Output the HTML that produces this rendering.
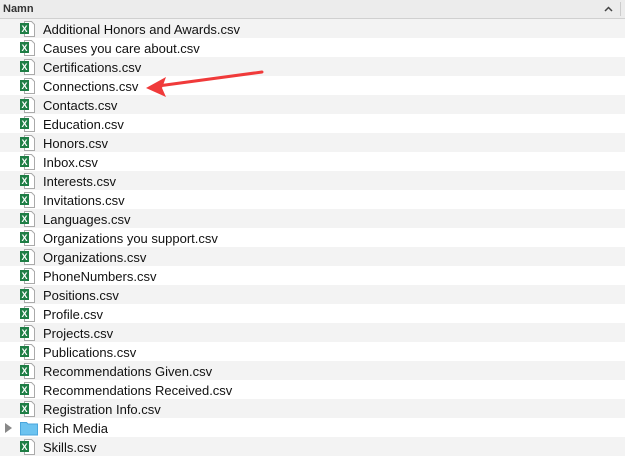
<!DOCTYPE html><html><head><style>
body{margin:0;width:625px;height:457px;overflow:hidden;background:#fff;font-family:"Liberation Sans",sans-serif;position:relative}
.hd{position:absolute;left:0;top:0;width:625px;height:18px;background:#ececec;border-bottom:1px solid #d0d0d0;font-size:11px;font-weight:bold;color:#333;line-height:18px;text-indent:3px}
.hd .s{position:absolute;right:4px;top:2px;width:1px;height:14px;background:#ccc}
.r{position:absolute;left:0;width:625px;height:19px;font-size:13px;color:#111;line-height:19px}
.r.g{background:#f3f3f3}
.r span{position:absolute;left:43px;top:1px}
.ic{position:absolute;left:20px;top:1px}
</style></head><body>
<div class="hd">Namn<svg style="position:absolute;right:12px;top:6px" width="9" height="6"><path d="M1 5L4.5 1.5L8 5" stroke="#444" stroke-width="1.5" fill="none"/></svg><span class="s"></span></div>
<div id="rows"></div>
<svg style="position:absolute;left:0;top:0" width="625" height="457"><path d="M262 72 L158 86" stroke="#f03a3a" stroke-width="3" fill="none" stroke-linecap="round"/><path d="M146 88 L166 77 L162 88 L166 97 Z" fill="#f03a3a"/></svg>
<script>
var n=["Additional Honors and Awards.csv","Causes you care about.csv","Certifications.csv","Connections.csv","Contacts.csv","Education.csv","Honors.csv","Inbox.csv","Interests.csv","Invitations.csv","Languages.csv","Organizations you support.csv","Organizations.csv","PhoneNumbers.csv","Positions.csv","Profile.csv","Projects.csv","Publications.csv","Recommendations Given.csv","Recommendations Received.csv","Registration Info.csv","Rich Media","Skills.csv"];
var x='<svg class="ic" width="16" height="18"><path d="M4.5 1.5h7l3 3v12h-10z" fill="#fff" stroke="#aaa"/><rect x="0" y="3" width="9" height="11" fill="#1e7e45"/><text x="1.5" y="12" font-size="9" font-weight="bold" fill="#fff" font-family="Liberation Sans">X</text></svg>';
var f='<svg style="position:absolute;left:5px;top:5px" width="8" height="10"><path d="M0 0L7 5L0 10Z" fill="#888"/></svg><svg class="ic" width="18" height="16" style="top:2px"><path d="M0.5 2.5h6l1.5 1.5h9.5v11h-17z" fill="#6cc3f0" stroke="#4aa6dc"/></svg>';
var h='';n.forEach(function(t,i){h+='<div class="r'+(i%2==0?' g':'')+'" style="top:'+(19+19*i)+'px">'+(t=="Rich Media"?f:x)+'<span>'+t+'</span></div>'});
document.getElementById('rows').innerHTML=h;
</script>
</body></html>
